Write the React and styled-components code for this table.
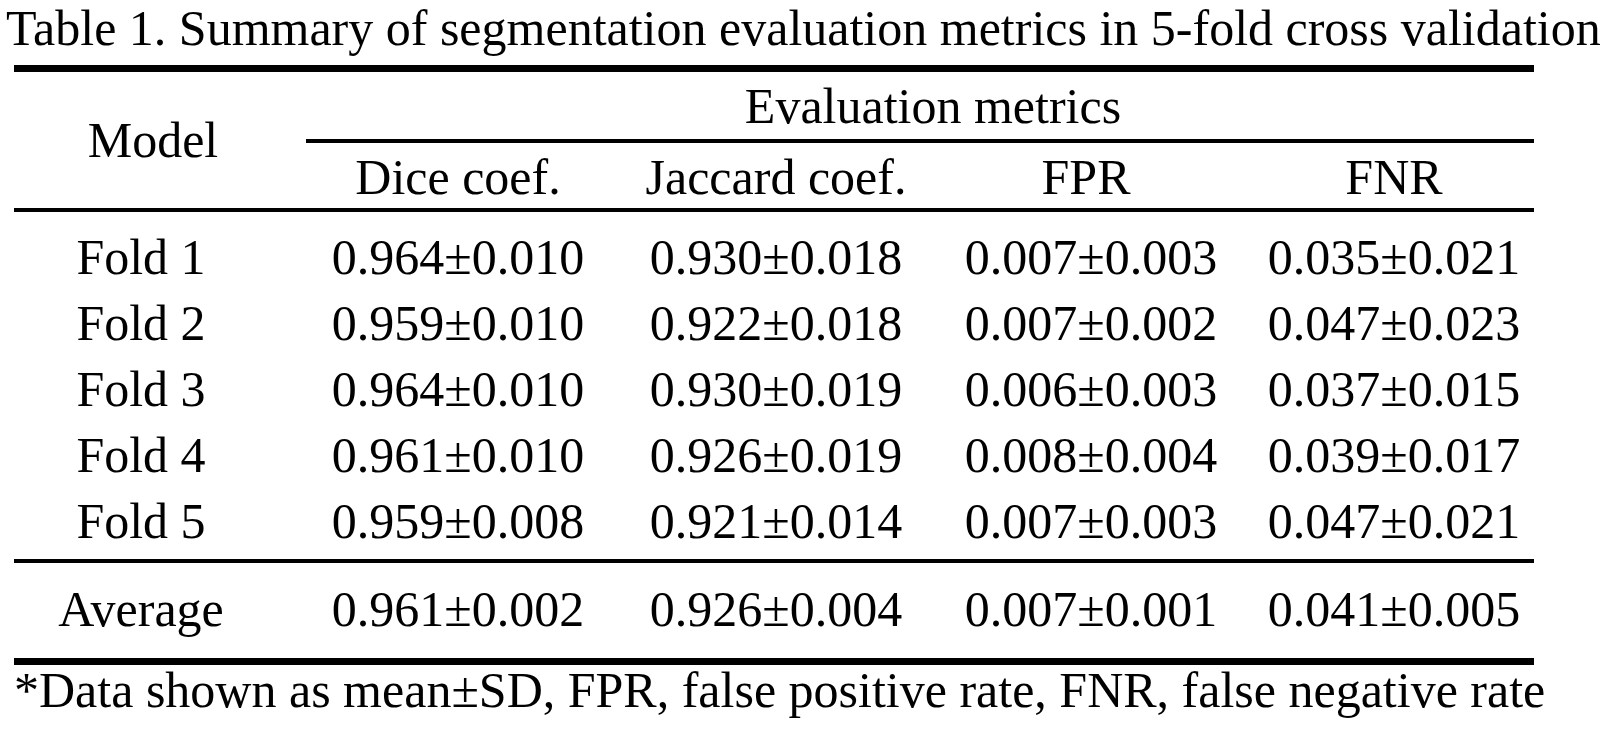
import React from 'react';
import styled, { createGlobalStyle } from 'styled-components';

const GlobalStyle = createGlobalStyle`
  html, body {
    margin: 0;
    padding: 0;
    background: #ffffff;
  }
  body {
    font-family: "Liberation Serif", "Times New Roman", serif;
    color: #000000;
  }
`;

const COLUMNS = '278px 332px 304px 326px 280px';

const Page = styled.div`
  width: 1611px;
  height: 729px;
  padding-top: 3px;
  box-sizing: border-box;
  overflow: hidden;
  font-size: 50px;
  line-height: 50px;
`;

const Caption = styled.div`
  padding-left: 6px;
  white-space: nowrap;
`;

const Table = styled.div`
  margin: 12px 0 0 14px;
  width: 1520px;
  border-top: 7px solid #000;
  border-bottom: 7px solid #000;
`;

const Head = styled.div`
  display: grid;
  grid-template-columns: 278px 1fr;
`;

const ModelCell = styled.div`
  display: flex;
  align-items: center;
  justify-content: center;
`;

const MetricsGroup = styled.div`
  display: flex;
  flex-direction: column;
`;

const GroupTitle = styled.div`
  padding: 9px 0 8px 40px;
  text-align: center;
`;

const Rule = styled.div`
  height: ${({ $thick }) => $thick || 4}px;
  margin-left: ${({ $inset }) => $inset || 0}px;
  background: #000;
`;

const SubHead = styled.div`
  display: grid;
  grid-template-columns: 332px 304px 326px 280px;
  padding: 9px 0 6px;
`;

const HeadCell = styled.div`
  text-align: center;
  white-space: nowrap;
  padding-right: ${({ $shift }) => $shift || 0}px;
`;

const Body = styled.div`
  padding: ${({ $pad }) => $pad};
`;

const Row = styled.div`
  display: grid;
  grid-template-columns: ${COLUMNS};
  line-height: 66px;
`;

const Cell = styled.div`
  text-align: center;
  white-space: nowrap;
  padding-right: ${({ $label }) => ($label ? 24 : 0)}px;
`;

const Note = styled.div`
  padding-left: 14px;
  white-space: nowrap;
`;

const folds = [
  ['Fold 1', '0.964±0.010', '0.930±0.018', '0.007±0.003', '0.035±0.021'],
  ['Fold 2', '0.959±0.010', '0.922±0.018', '0.007±0.002', '0.047±0.023'],
  ['Fold 3', '0.964±0.010', '0.930±0.019', '0.006±0.003', '0.037±0.015'],
  ['Fold 4', '0.961±0.010', '0.926±0.019', '0.008±0.004', '0.039±0.017'],
  ['Fold 5', '0.959±0.008', '0.921±0.014', '0.007±0.003', '0.047±0.021'],
];

const average = ['Average', '0.961±0.002', '0.926±0.004', '0.007±0.001', '0.041±0.005'];

function DataRow({ values }) {
  return (
    <Row>
      {values.map((v, i) => (
        <Cell key={i} $label={i === 0}>{v}</Cell>
      ))}
    </Row>
  );
}

export default function App() {
  return (
    <Page>
      <GlobalStyle />
      <Caption>Table 1. Summary of segmentation evaluation metrics in 5-fold cross validation</Caption>
      <Table>
        <Head>
          <ModelCell>Model</ModelCell>
          <MetricsGroup>
            <GroupTitle>Evaluation metrics</GroupTitle>
            <Rule $inset={14} />
            <SubHead>
              <HeadCell>Dice coef.</HeadCell>
              <HeadCell>Jaccard coef.</HeadCell>
              <HeadCell $shift={10}>FPR</HeadCell>
              <HeadCell>FNR</HeadCell>
            </SubHead>
          </MetricsGroup>
        </Head>
        <Rule />
        <Body $pad="12px 0 5px">
          {folds.map((row) => (
            <DataRow key={row[0]} values={row} />
          ))}
        </Body>
        <Rule />
        <Body $pad="13px 0 16px">
          <DataRow values={average} />
        </Body>
      </Table>
      <Note>*Data shown as mean±SD, FPR, false positive rate, FNR, false negative rate</Note>
    </Page>
  );
}
